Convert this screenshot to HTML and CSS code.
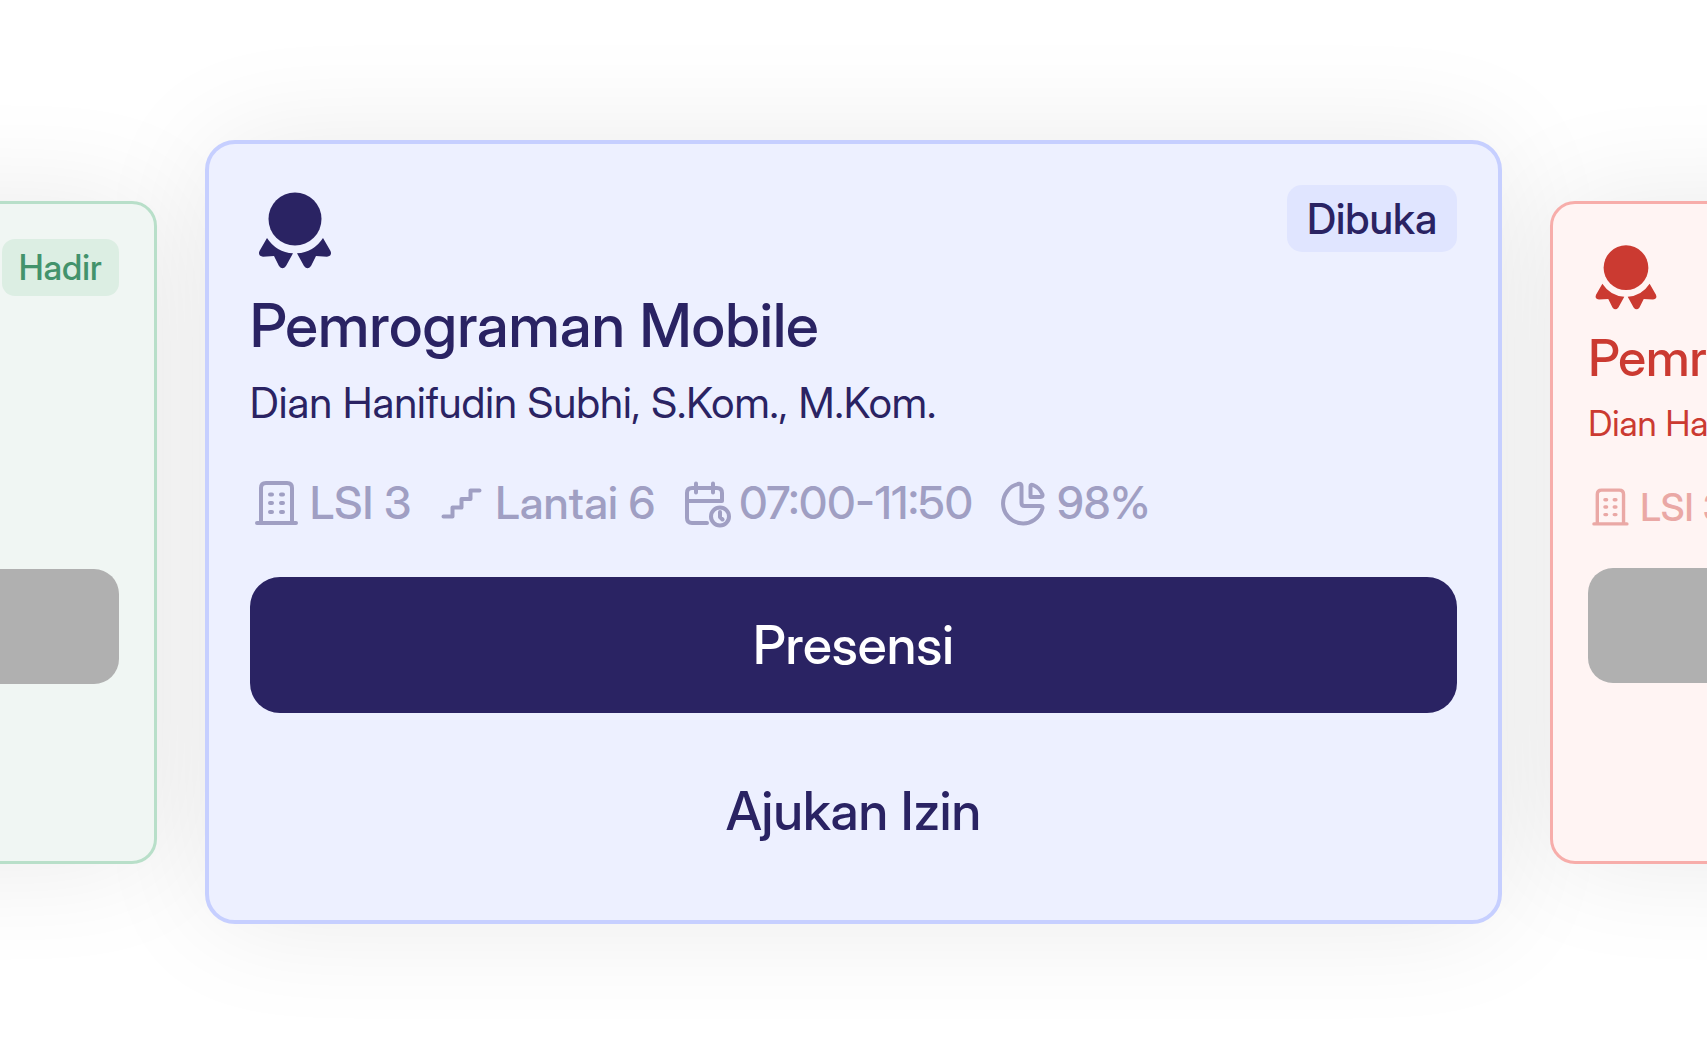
FILE: index.html
```html
<!DOCTYPE html>
<html lang="id">
<head>
<meta charset="utf-8">
<meta name="viewport" content="width=device-width, initial-scale=1">
<title>Presensi</title>
<link rel="stylesheet" href="styles.css">
</head>
<body>
<svg class="sprite" aria-hidden="true">
  <symbol id="award" viewBox="0 0 90 90">
    <circle cx="45" cy="34" r="26.5"/>
    <path d="M17 53Q26.500 67.500 43 68.300L36 81Q32.500 85.500 29 81L24 71L13 71.700Q7.500 71 9.500 66Z"/>
    <path d="M73 53Q63.500 67.500 47 68.300L54 81Q57.500 85.500 61 81L66 71L77 71.700Q82.500 71 80.500 66Z"/>
  </symbol>
  <symbol id="building" viewBox="0 0 52 52">
    <path d="M7 46H46M11 46V11Q11 6 16 6H37Q42 6 42 11V46M20 17.500h2M31 17.500h2M20 26h2M31 26h2M20 35h2M31 35h2"/>
  </symbol>
  <symbol id="stairs" viewBox="0 0 52 52">
    <path d="M8.500 39.500h9v-9h9v-8.500h9v-8.500h9"/>
  </symbol>
  <symbol id="calendar" viewBox="0 0 52 52">
    <path d="M28 46H13Q8 46 8 41V16Q8 11 13 11H38Q43 11 43 16V24H8M17 6.500v9M34 6.500v9M41 35v5l2.500 2.500"/>
    <circle cx="41" cy="39.500" r="9"/>
  </symbol>
  <symbol id="pie" viewBox="0 0 52 52">
    <path d="M22 6.800Q24.500 6.500 24.500 9V26Q24.500 29 27.500 29H43Q46 29 45.400 31.500A20 20 0 1 1 22 6.800Z"/>
    <path d="M33.500 9.500Q33.500 7 36 8A17 17 0 0 1 45.500 17.500Q46 20 43.500 20H33.500Z"/>
  </symbol>
</svg>

<main class="carousel">
  <article class="card card--side card--green">
    <header class="card__top">
      <span class="badge">Hadir</span>
    </header>
    <button class="btn btn--solid" type="button" disabled aria-label="Presensi"></button>
  </article>

  <article class="card card--blue">
    <header class="card__top">
      <svg class="award" aria-hidden="true"><use href="#award"/></svg>
      <span class="badge">Dibuka</span>
    </header>
    <h2 class="card__title">Pemrograman Mobile</h2>
    <p class="card__lecturer">Dian Hanifudin Subhi, S.Kom., M.Kom.</p>
    <ul class="meta">
      <li class="meta__item"><svg class="icon" aria-hidden="true"><use href="#building"/></svg>LSI 3</li>
      <li class="meta__item"><svg class="icon" aria-hidden="true"><use href="#stairs"/></svg>Lantai 6</li>
      <li class="meta__item"><svg class="icon" aria-hidden="true"><use href="#calendar"/></svg>07:00-11:50</li>
      <li class="meta__item"><svg class="icon" aria-hidden="true"><use href="#pie"/></svg>98%</li>
    </ul>
    <button class="btn btn--solid" type="button">Presensi</button>
    <button class="btn btn--text" type="button">Ajukan Izin</button>
  </article>

  <article class="card card--side card--red">
    <header class="card__top">
      <svg class="award" aria-hidden="true"><use href="#award"/></svg>
    </header>
    <h2 class="card__title">Pemrograman Mobile</h2>
    <p class="card__lecturer">Dian Hanifudin Subhi, S.Kom., M.Kom.</p>
    <ul class="meta">
      <li class="meta__item"><svg class="icon" aria-hidden="true"><use href="#building"/></svg>LSI 3</li>
    </ul>
    <button class="btn btn--solid" type="button" disabled aria-label="Presensi"></button>
  </article>
</main>
</body>
</html>
```
FILE: styles.css
```css
* {
  box-sizing: border-box;
}

body {
  margin: 0;
  background: #fff;
  font-family: "Inter Display", Inter, "Liberation Sans", sans-serif;
  font-weight: 500;
}

.sprite {
  display: none;
}

.carousel {
  display: flex;
  align-items: center;
  justify-content: center;
  gap: 48px;
  min-height: 100vh;
  overflow: hidden;
  isolation: isolate;
}

.card {
  --pad: 41px;
  --award: 90px;
  --title: 60px;
  --title-line: 73px;
  --small: 42px;
  --small-line: 53px;
  --meta: 45px;
  --icon: 52px;
  --gap: 14px;
  --gap-lg: 48px;
  --button: 136px;
  --radius: 30px;
  position: relative;
  flex: none;
  display: flex;
  flex-direction: column;
  width: 76%;
  padding: var(--pad);
  border: 4px solid var(--line);
  border-radius: var(--radius);
  background: var(--surface);
  color: var(--ink);
}

/* Shadows sit below every card, so neighbours are never shaded. */
.card::before {
  content: "";
  position: absolute;
  inset: 0;
  z-index: -1;
  border-radius: var(--radius);
  box-shadow: 0 0 120px rgba(0, 0, 0, 0.09);
}

.card--side {
  --pad: 35px;
  --award: 76px;
  --title: 51px;
  --title-line: 62px;
  --small: 35px;
  --small-line: 45px;
  --meta: 38px;
  --icon: 44px;
  --gap: 12px;
  --gap-lg: 39px;
  --button: 115px;
  --radius: 25px;
  width: 64%;
  min-height: 663px;
  border-width: 3px;
}

.card--blue {
  --line: #c6cfff;
  --surface: #edf0ff;
  --ink: #2a2363;
  --tint: #e0e5ff;
  --muted: #a09fc3;
}

.card--green {
  --line: #b8dfc9;
  --surface: #f0f6f3;
  --ink: #43936c;
  --tint: #dceee3;
  --muted: #a9cfbc;
}

.card--red {
  --line: #f7adaa;
  --surface: #fff4f3;
  --ink: #cb3a31;
  --tint: #fde2e0;
  --muted: #eaa8a5;
}

.card__top {
  display: flex;
  align-items: flex-start;
  justify-content: space-between;
  min-height: var(--award);
}

.award {
  width: var(--award);
  height: var(--award);
  fill: currentColor;
}

.badge {
  margin-left: auto;
  padding: 7px 20px;
  border-radius: 15px;
  background: var(--tint);
  font-size: var(--small);
  line-height: var(--small-line);
}

.card--side .badge {
  padding: 6px 17px;
  border-radius: 13px;
}

.card__title {
  margin: var(--gap) 0 0;
  font-size: var(--title);
  font-weight: 500;
  line-height: var(--title-line);
  white-space: nowrap;
}

.card__lecturer {
  margin: var(--gap) 0 0;
  font-size: var(--small);
  font-weight: 400;
  line-height: var(--small-line);
  white-space: nowrap;
}

.meta {
  display: flex;
  gap: 24px;
  margin: var(--gap-lg) 0;
  padding: 0;
  list-style: none;
  color: var(--muted);
  font-size: var(--meta);
  line-height: var(--icon);
  white-space: nowrap;
}

.meta__item {
  display: flex;
  align-items: center;
  gap: 8px;
}

.icon {
  width: var(--icon);
  height: var(--icon);
  fill: none;
  stroke: currentColor;
  stroke-width: 4;
  stroke-linecap: round;
  stroke-linejoin: round;
}

.btn {
  height: var(--button);
  border: 0;
  border-radius: var(--radius);
  background: none;
  color: var(--ink);
  font-family: inherit;
  font-size: 53px;
  font-weight: 500;
  line-height: 64px;
}

.btn--solid {
  background: var(--ink);
  color: #fff;
}

.btn--solid:disabled {
  background: #b0b0b0;
}

.btn--text {
  margin-top: 30px;
}

.card--green .btn {
  margin-top: 254px;
}
```
